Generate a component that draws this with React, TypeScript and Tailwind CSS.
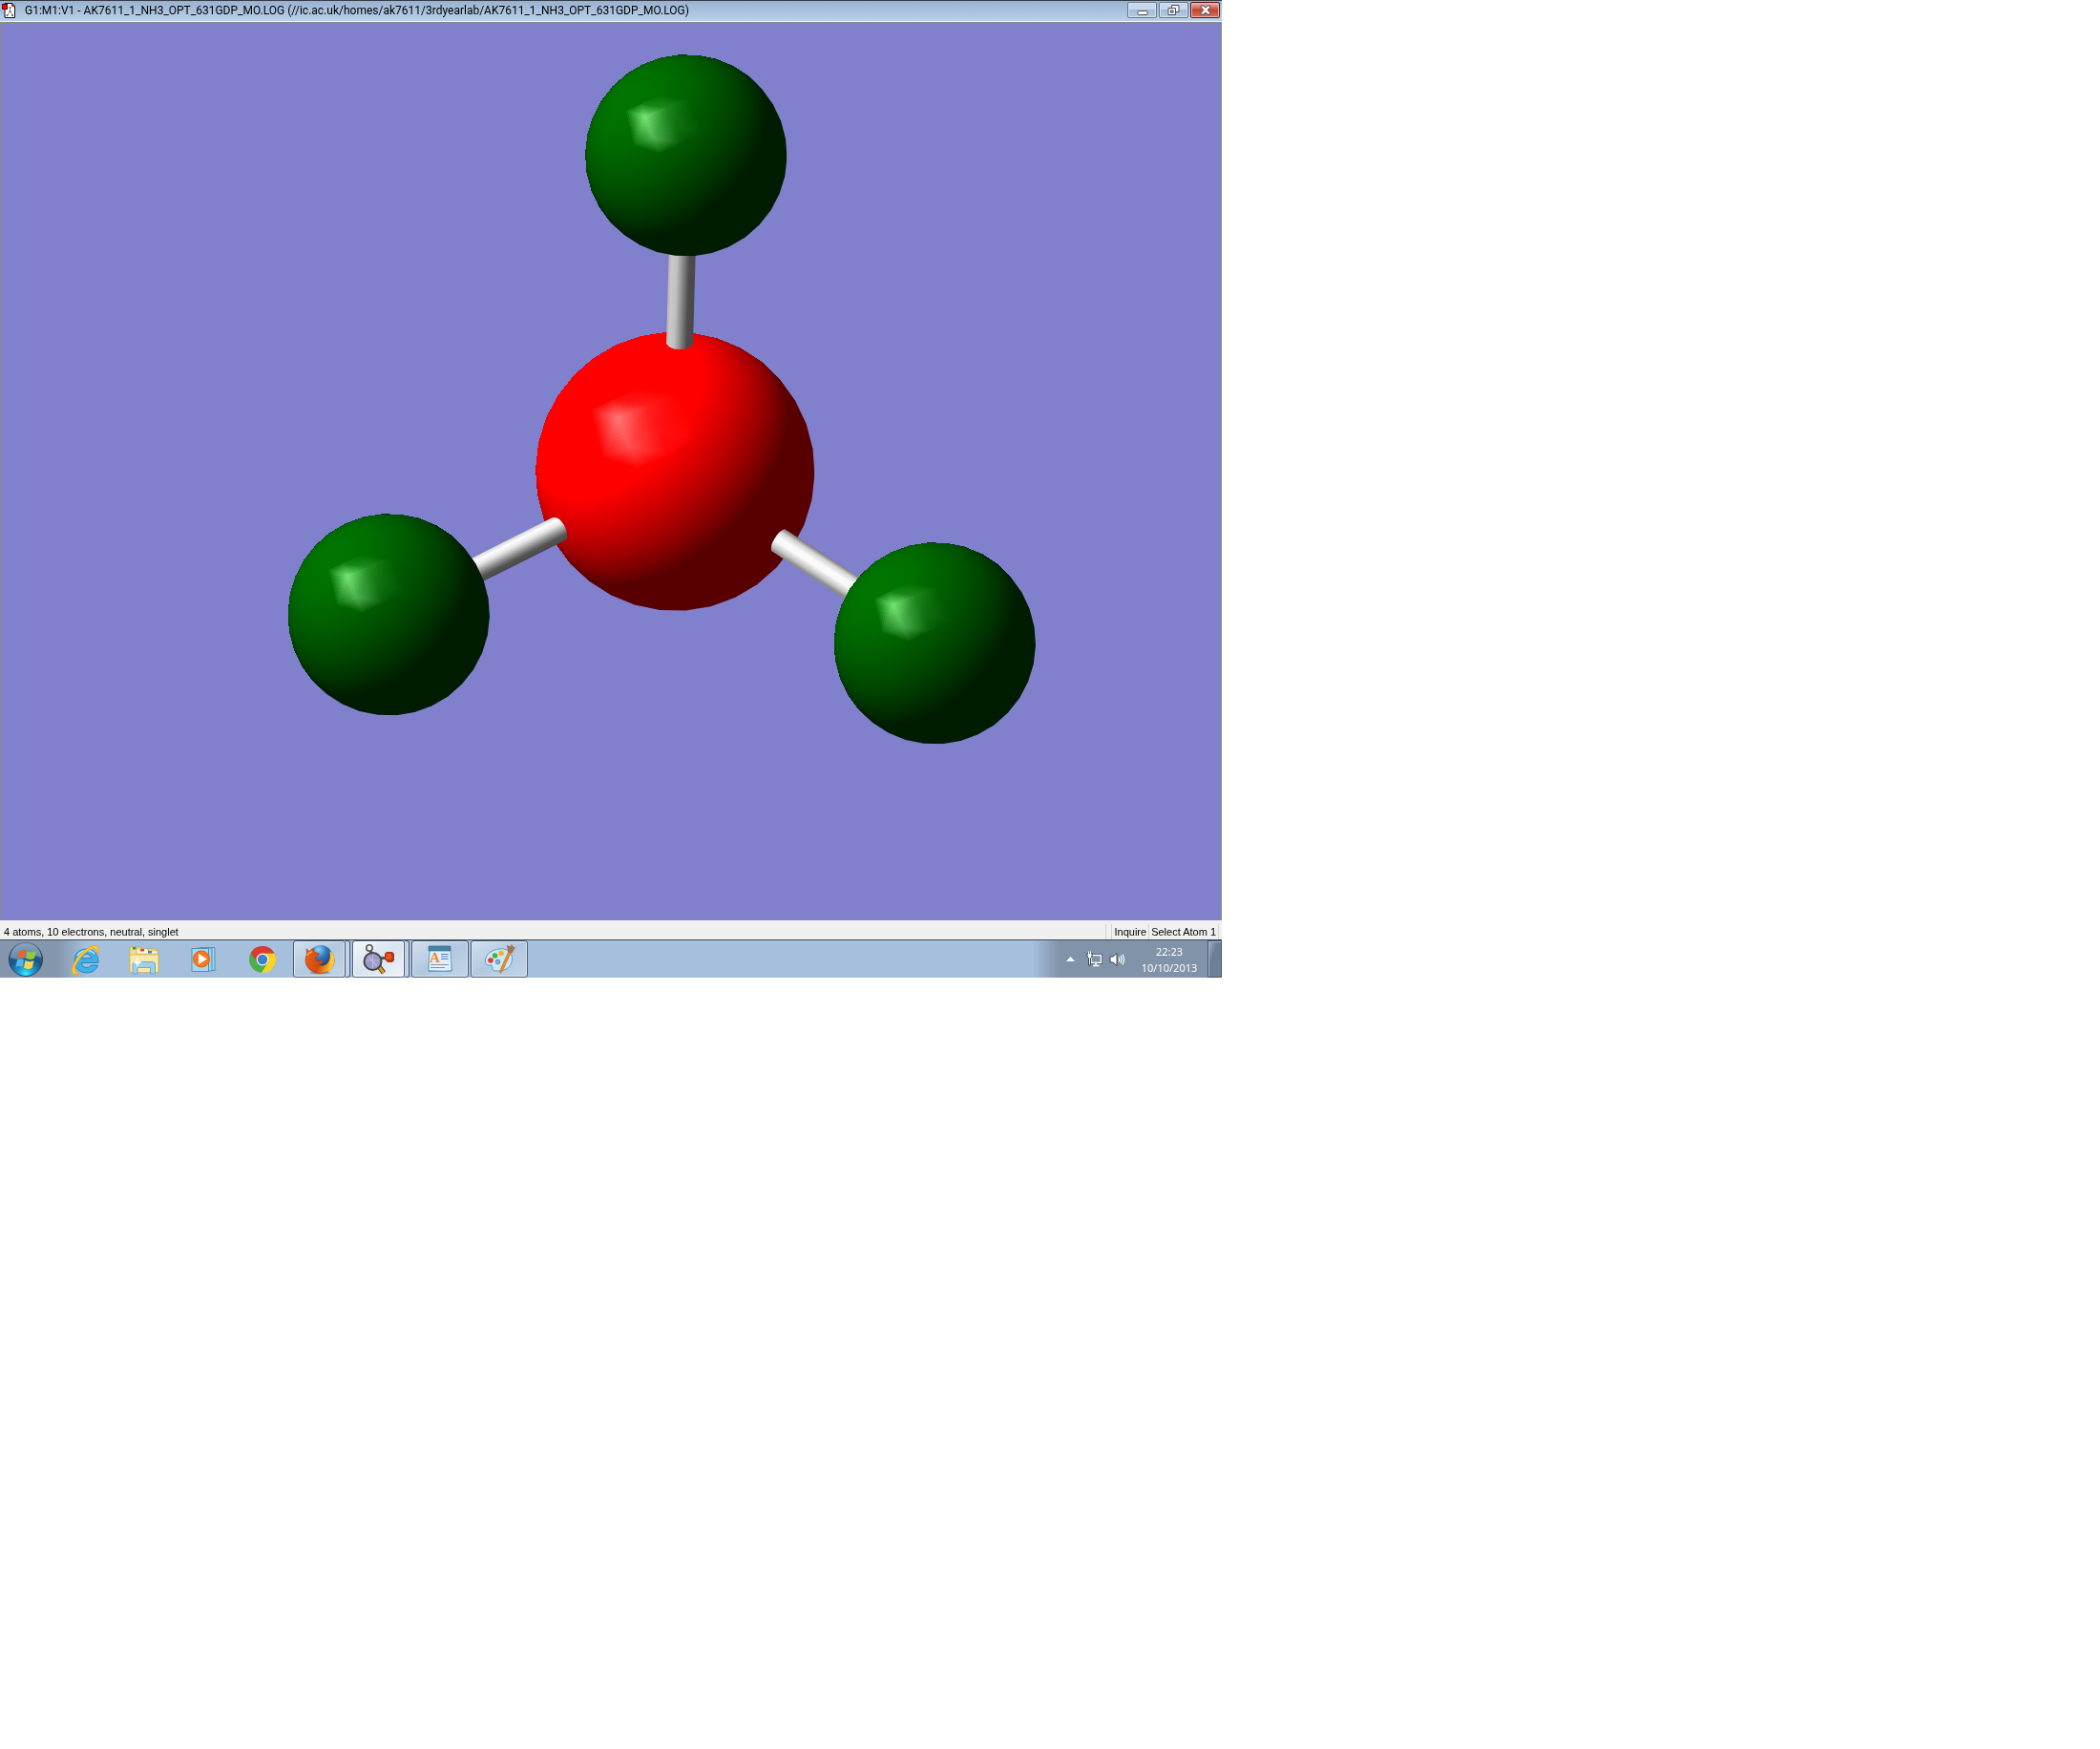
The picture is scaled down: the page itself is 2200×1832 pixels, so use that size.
import type { ReactNode } from 'react'

type Vec = [number, number]

// Direction of the lamp as seen from the viewer (y points down)
const LIGHT = { x: -0.58, y: -0.58, z: 0.57 }
const STEPS = 90
const SIDES = 34

// Vertices of the highlight on a unit sphere: x, y, brightness
const GLINT: Record<string, [number, number, number]> = {
  P: [-0.417, -0.385, 1],
  A: [-0.599, -0.446, 0.06],
  B: [-0.451, -0.515, 0.12],
  C: [-0.2, -0.47, 0.26],
  D: [-0.325, -0.173, 0.66],
  E: [-0.52, -0.104, 0.04],
  F: [-0.262, -0.024, 0.04],
  G: [-0.05, -0.127, 0.04],
  H: [-0.12, -0.3, 0.16],
  I: [0, -0.55, 0.02],
  J: [0.166, -0.23, 0],
  K: [-0.257, -0.6, 0],
}

const GLINT_FACES = ['PAB', 'PBC', 'PAE', 'PED', 'DEF', 'DFG', 'PCD', 'DCH', 'DHG', 'CHI', 'HIJ', 'HGJ', 'BKC', 'CKI']

function glintTriangles() {
  const n = 9
  const out: { points: string; level: number }[] = []
  for (const face of GLINT_FACES) {
    const [a, b, c] = face.split('').map((key) => GLINT[key])
    const at = (i: number, j: number) => {
      const u = i / n
      const v = j / n
      return a.map((val, k) => val * (1 - u - v) + b[k] * u + c[k] * v)
    }
    const push = (pts: number[][]) => {
      const level = (pts[0][2] + pts[1][2] + pts[2][2]) / 3
      out.push({ points: pts.map((p) => `${p[0].toFixed(4)},${p[1].toFixed(4)}`).join(' '), level })
    }
    for (let i = 0; i < n; i++) {
      for (let j = 0; j < n - i; j++) {
        push([at(i, j), at(i + 1, j), at(i, j + 1)])
        if (i + j < n - 1) push([at(i + 1, j), at(i + 1, j + 1), at(i, j + 1)])
      }
    }
  }
  return out
}

const glint = glintTriangles()

const outline = Array.from({ length: SIDES }, (_, i) => {
  const t = (i / SIDES) * Math.PI * 2 + 0.02
  return `${Math.cos(t).toFixed(4)},${Math.sin(t).toFixed(4)}`
}).join(' ')

const lightAngle = (Math.atan2(LIGHT.y, LIGHT.x) * 180) / Math.PI
const lightXY = Math.hypot(LIGHT.x, LIGHT.y)

interface AtomProps {
  center: Vec
  radius: number
  shade: (level: number) => string
}

// Each band is the part of the sphere where the light falls at least at `level`
function Atom({ center, radius, shade }: AtomProps) {
  return (
    <g transform={`translate(${center[0]} ${center[1]}) scale(${radius})`}>
      <g clipPath="url(#atom-outline)">
        <rect x="-1" y="-1" width="2" height="2" fill={shade(0)} />
        <g transform={`rotate(${lightAngle})`}>
          {Array.from({ length: STEPS }, (_, i) => {
            const level = i / STEPS
            const ring = Math.sqrt(1 - level * level)
            return (
              <g key={i} fill={shade(level)}>
                <ellipse cx={level * lightXY} cy="0" rx={ring * LIGHT.z} ry={ring} />
                {level < lightXY && <rect x={level / lightXY} y="-1" width="1" height="2" />}
              </g>
            )
          })}
        </g>
      </g>
      <use href="#glint" className="mix-blend-plus-lighter" />
    </g>
  )
}

const green = (level: number) => `rgb(0 ${Math.round(28 + 90 * level)} 0)`
const red = (level: number) => `rgb(${Math.min(255, Math.round(88 + 245 * level))} 0 0)`

function MoleculeView() {
  return (
    <svg viewBox="1 24 1278 940" className="block h-auto w-full bg-[#8180cc]" role="img" aria-label="Molecule">
      <defs>
        <clipPath id="atom-outline">
          <polygon points={outline} />
        </clipPath>
        <g id="glint" shapeRendering="crispEdges">
          {glint.map((t, i) => {
            const v = Math.round(t.level * 118)
            return <polygon key={i} points={t.points} fill={`rgb(${v} ${v} ${v})`} />
          })}
        </g>
        <linearGradient id="bond-top" gradientUnits="userSpaceOnUse" x1="699" y1="320" x2="728" y2="321">
          <stop offset="0" stopColor="#b4b4b4" />
          <stop offset="0.12" stopColor="#c9c9c9" />
          <stop offset="0.3" stopColor="#c0c0c0" />
          <stop offset="0.55" stopColor="#808080" />
          <stop offset="0.75" stopColor="#4c4c4c" />
          <stop offset="1" stopColor="#484848" />
        </linearGradient>
        <linearGradient id="bond-left" gradientUnits="userSpaceOnUse" x1="538" y1="563" x2="550" y2="587">
          <stop offset="0" stopColor="#d8d8d8" />
          <stop offset="0.15" stopColor="#fff" />
          <stop offset="0.35" stopColor="#e4e4e4" />
          <stop offset="0.65" stopColor="#808080" />
          <stop offset="0.8" stopColor="#545454" />
          <stop offset="1" stopColor="#484848" />
        </linearGradient>
        <linearGradient id="bond-right" gradientUnits="userSpaceOnUse" x1="861" y1="579" x2="847" y2="601">
          <stop offset="0" stopColor="#747474" />
          <stop offset="0.18" stopColor="#d4d4d4" />
          <stop offset="0.4" stopColor="#fafafa" />
          <stop offset="0.6" stopColor="#fafafa" />
          <stop offset="0.85" stopColor="#c4c4c4" />
          <stop offset="1" stopColor="#8c8c8c" />
        </linearGradient>
      </defs>
      <Atom center={[707.5, 494]} radius={146} shade={red} />
      <path d="M701 255 L729 255 L726 361 Q722 366 712 366 Q702 366 698 360Z" fill="url(#bond-top)" />
      <path d="M480 592 L577 543 Q583 540 588 546 Q595 554 594 565 L490 617Z" fill="url(#bond-left)" />
      <path d="M822 554 L915 614 L900 637 L808 577 Q807 571 811 565 Q816 556 822 554Z" fill="url(#bond-right)" />
      <Atom center={[719, 163]} radius={105.5} shade={green} />
      <Atom center={[407.5, 644]} radius={105.5} shade={green} />
      <Atom center={[979.5, 674]} radius={105.5} shade={green} />
    </svg>
  )
}

function TitleButton({ label, danger, children }: { label: string; danger?: boolean; children: ReactNode }) {
  return (
    <button
      type="button"
      aria-label={label}
      className={
        danger
          ? 'flex h-[17px] w-[31px] items-center justify-center rounded-xs border border-[#5a1420] bg-linear-to-b from-[#e8a598] from-10% via-[#c2442c] via-50% to-[#d4735c] shadow-[inset_0_0_0_1px_#eab5aa]'
          : 'flex h-[17px] w-[31px] items-center justify-center rounded-xs border border-[#66788f] bg-linear-to-b from-[#c6d8ec] from-45% via-[#a3bbd6] via-50% to-[#b5cbe4] shadow-[inset_0_0_0_1px_#d5e3f2]'
      }
    >
      {children}
    </button>
  )
}

function AppIcon() {
  return (
    <svg width="14" height="18" viewBox="0 0 14 18" aria-hidden="true">
      <path d="M3 1.5H11L13.5 4.5V16.5H3Z" fill="#fff" stroke="#111" />
      <path d="M10.5 1.5V4.5H13.5" fill="#e11" stroke="#111" strokeWidth="0.6" />
      <path d="M8.500 6V10M8.500 10L5.500 14M8.500 10L11.500 14" stroke="#999" fill="none" />
      <path d="M7.500 5H9.500V7H7.500ZM7.500 9H9.500V11H7.500ZM4.500 13H6.500V15H4.500ZM10 13H12V15H10Z" fill="#777" />
      <rect x="0.500" y="2.500" width="5" height="5" fill="#f00" stroke="#600" />
    </svg>
  )
}

function TitleBar() {
  return (
    <header className="flex h-[23px] items-center border-t border-b border-t-[#3a3a42] border-b-[#eef3f8] bg-linear-to-b from-[#98b2d1] to-[#b9d1ea] px-0.5 pb-0.5">
      <AppIcon />
      <h1 className="ml-2.5 grow truncate font-['Roboto','Open_Sans',sans-serif] text-[12px] leading-5 text-black">
        G1:M1:V1 - AK7611_1_NH3_OPT_631GDP_MO.LOG (//ic.ac.uk/homes/ak7611/3rdyearlab/AK7611_1_NH3_OPT_631GDP_MO.LOG)
      </h1>
      <div className="flex gap-0.5">
        <TitleButton label="Minimize">
          <svg width="12" height="12" viewBox="0 0 12 12" aria-hidden="true">
            <rect x="1" y="6.500" width="10" height="4" rx="1" fill="#fff" stroke="#4a5263" />
          </svg>
        </TitleButton>
        <TitleButton label="Restore">
          <svg width="13" height="13" viewBox="0 0 13 13" aria-hidden="true">
            <path d="M4.500 1.500H12V8.500H4.500Z" fill="#f4f6f9" stroke="#4a5263" />
            <path d="M1 4.500H8.500V11.500H1Z" fill="#f4f6f9" stroke="#4a5263" />
            <rect x="3.500" y="7" width="2.500" height="2" fill="#a9bfd8" stroke="#4a5263" />
          </svg>
        </TitleButton>
        <TitleButton label="Close" danger>
          <svg width="12" height="11" viewBox="0 0 12 11" aria-hidden="true">
            <path
              d="M1 1H4.200L6 3.200L7.800 1H11V2.200L8.200 5.500L11 8.800V10H7.800L6 7.800L4.200 10H1V8.800L3.800 5.500L1 2.200Z"
              fill="#fff"
              stroke="#4c4a58"
            />
          </svg>
        </TitleButton>
      </div>
    </header>
  )
}

function StatusBar() {
  return (
    <footer className="flex h-5 items-center bg-[#f0f0f0] pt-1 pr-[3px] pl-1 font-['Liberation_Sans',Arial,sans-serif] text-[11px] leading-4 text-black">
      <p className="grow">4 atoms, 10 electrons, neutral, singlet</p>
      <span className="h-4 w-[7px] border-x border-[#d4d4d4]" />
      <p className="px-0.5">Inquire</p>
      <p className="border-x border-[#d4d4d4] px-0.5">Select Atom 1</p>
    </footer>
  )
}

function StartIcon() {
  return (
    <svg width="38" height="38" viewBox="0 0 38 38" aria-hidden="true">
      <defs>
        <radialGradient id="orb" cx="0.5" cy="0.95" r="0.9">
          <stop offset="0" stopColor="#3ff0ff" />
          <stop offset="0.25" stopColor="#1a9ed4" />
          <stop offset="0.6" stopColor="#1c527f" />
          <stop offset="1" stopColor="#5b7c9c" />
        </radialGradient>
      </defs>
      <circle cx="19" cy="19" r="17.500" fill="url(#orb)" stroke="#23405e" />
      <path d="M3 17A16 16 0 0 1 35 17Q27 13 19 17T3 17Z" fill="#c7d9e8" opacity="0.4" />
      <path d="M12.500 10Q15.500 8 19 10L17.500 17.500Q14 15.700 10.500 17.500Z" fill="#f0622a" />
      <path d="M20.500 10.500Q24.500 12.700 30 10L28 18Q23.500 20 19 17.800Z" fill="#95c83d" />
      <path d="M10 19.500Q13.500 17.700 17 19.500L15.500 27Q12 25 8.500 27Z" fill="#55b4ec" />
      <path d="M18.500 20Q23 22.300 27.500 20.300L25.500 28Q21 30 17 27.800Z" fill="#ffd34e" />
    </svg>
  )
}

function ExplorerIcon() {
  return (
    <svg width="32" height="34" viewBox="0 0 32 34" aria-hidden="true">
      <path
        d="M16.500 6C9 6 4 11 4 18.500S9.500 31 17 31C22.500 31 27 28 28.500 23H21.500Q20 25.500 17 25.500Q12 25.500 11.500 20.500H29C29.500 11.500 24.500 6 16.500 6ZM11.700 15.800Q12.500 11.300 16.700 11.300Q21 11.300 21.500 15.800Z"
        fill="#3fb0e8"
        stroke="#1679bd"
        strokeWidth="0.8"
      />
      <path d="M7 13Q11 7.500 17 7.500Q22 7.500 25 11" fill="none" stroke="#bfe9fb" strokeWidth="1.500" />
      <path
        d="M27.500 12.500Q31 4 27.500 2.500C22.500 1 11 8.500 5.500 17.500C1 25 0 31.500 3.500 32.500Q6 33 10 30Q4.500 31.500 4.500 27.500C4.500 22 11 13 18 8C23 4.500 28.500 3.500 27.500 12.500Z"
        fill="#fdc92b"
        stroke="#e0a010"
        strokeWidth="0.6"
      />
    </svg>
  )
}

function FolderIcon() {
  return (
    <svg width="34" height="32" viewBox="0 0 34 32" aria-hidden="true">
      <path d="M2 8V3H13L15 5H30V9H32V29H2Z" fill="#f3dc8c" stroke="#c9a94c" strokeWidth="0.8" />
      <path d="M9 5H21V7H31V10H9Z" fill="#fff8dc" stroke="#c9a94c" strokeWidth="0.6" />
      <rect x="5" y="3" width="3.500" height="2.500" fill="#18a82c" />
      <rect x="13" y="5" width="4" height="2.500" fill="#d8412c" />
      <rect x="21" y="7" width="4" height="2.500" fill="#2c86d8" />
      <path d="M2 11H32V28Q32 29.500 30.500 29.500H3.500Q2 29.500 2 28Z" fill="#fbe9a8" stroke="#d1b257" strokeWidth="0.8" />
      <path d="M5 31V21Q5 18.500 8 18.500H25Q28.500 18.500 28.500 21V31H23.500V24.500H10V31Z" fill="#9ed0ea" stroke="#5c9dc4" strokeWidth="0.8" />
      <path d="M10 13L11 17.500L15 19L11 20.500L10 25L9 20.500L5 19L9 17.500Z" fill="#fff" />
    </svg>
  )
}

function MediaIcon() {
  return (
    <svg width="30" height="28" viewBox="0 0 30 28" aria-hidden="true">
      <path d="M14 1.500H25V24H29L27 25.500H14Z" fill="#7fb4d4" opacity="0.6" />
      <path d="M10 1.500H25V25.500H10Z" fill="#a5d3ec" stroke="#4f91b8" />
      <path d="M6 2H22V26H6Z" fill="#9fd0ea" stroke="#4f91b8" />
      <path d="M1 2.500H18.500V26.500H1Z" fill="#a9d6ee" stroke="#4f91b8" />
      <circle cx="11" cy="13.500" r="8.500" fill="#f47a20" stroke="#e05f0c" />
      <path d="M8 8L17 13.500L8 19Z" fill="#fff" />
    </svg>
  )
}

function ChromeIcon() {
  return (
    <svg width="30" height="30" viewBox="0 0 30 30" aria-hidden="true">
      <circle cx="15" cy="15" r="14" fill="#4cae4f" />
      <path d="M15 8.500H27.400A14 14 0 0 1 14 29L20.600 18.200Z" fill="#fcd327" />
      <path d="M2.900 8A14 14 0 0 1 27.400 8.500H15L9.400 18Z" fill="#dd3a30" />
      <circle cx="15" cy="15" r="6.500" fill="#f2f2f2" />
      <circle cx="15" cy="15" r="5.200" fill="#3f80cc" />
    </svg>
  )
}

function FirefoxIcon() {
  return (
    <svg width="32" height="32" viewBox="0 0 32 32" aria-hidden="true">
      <defs>
        <radialGradient id="globe" cx="0.4" cy="0.2" r="0.8">
          <stop offset="0" stopColor="#8fd6f7" />
          <stop offset="0.4" stopColor="#2f7cc4" />
          <stop offset="1" stopColor="#12346f" />
        </radialGradient>
        <linearGradient id="tail" x1="0" y1="0" x2="1" y2="0.3">
          <stop offset="0" stopColor="#e8641c" />
          <stop offset="0.6" stopColor="#d4480f" />
          <stop offset="1" stopColor="#fbc02a" />
        </linearGradient>
      </defs>
      <ellipse cx="16" cy="30" rx="11" ry="1.500" fill="#5c6f86" opacity="0.5" />
      <circle cx="17" cy="13.500" r="12.500" fill="url(#globe)" />
      <path
        d="M2 5L5.500 7.500Q7 4.500 10 4.500L9.500 7.500Q12 9.500 15 9.500Q16 11.500 12 13.500Q11 16 12.500 17.500Q16 18.500 19 16.500Q20 20 15 21.500Q20 24 24 20Q28 16 26.500 7Q31.500 11 31.300 17C31 25 24.500 30.500 16 30.500C7.500 30.500 1 24.500 1 16Q1 13 2.500 10.500Z"
        fill="url(#tail)"
        stroke="#a53a0c"
        strokeWidth="0.6"
      />
      <path d="M26.500 7Q31.500 11 31.300 17Q31 25 24 28.500Q29 21 25.500 19Q28 15 26.500 7Z" fill="#fccb3a" />
      <path d="M3 12Q4 8.500 8 8" stroke="#f9a24c" strokeWidth="1.500" fill="none" />
    </svg>
  )
}

function MoleculeIcon() {
  return (
    <svg width="34" height="32" viewBox="0 0 34 32" aria-hidden="true">
      <path d="M7 4L10 12M18 15L26 14" stroke="#555" strokeWidth="3" />
      <path d="M16 22L22 30" stroke="#4a3a18" strokeWidth="5" />
      <path d="M16 22L22 30" stroke="#d69a2c" strokeWidth="3" />
      <circle cx="7" cy="4" r="3.200" fill="#eee" stroke="#555" strokeWidth="1.500" />
      <circle cx="10.500" cy="18" r="9" fill="#9c98c8" stroke="#444" strokeWidth="2" />
      <path d="M4 17H17M10.500 11V25M6 13L15 23" stroke="#bcb8e0" strokeWidth="1.200" />
      <path d="M25 8H31L33 10V17L31 19H26L23 16V10Z" fill="#b03a18" />
      <path d="M24.500 10H30V16H24.500Z" fill="#f0501c" />
    </svg>
  )
}

function WordPadIcon() {
  return (
    <svg width="28" height="30" viewBox="0 0 28 30" aria-hidden="true">
      <path d="M3 3H25L27 27L25 28H2L1 27Z" fill="#5f9fc8" />
      <path d="M3.500 3H24.500L26 26Q24 27.500 2 26.500Z" fill="#e2effa" stroke="#6fa6cc" strokeWidth="0.6" />
      <rect x="2" y="1" width="23" height="5" rx="0.500" fill="#4583aa" stroke="#2a5f85" strokeWidth="0.600" />
      <text x="3" y="18" fontSize="15" fontWeight="700" fill="#f0862a" fontFamily="Liberation Serif, serif">
        A
      </text>
      <path d="M15 9.500H22.500M15 12H22.500M15 14.500H22.500" stroke="#4b7fc4" strokeWidth="1.200" />
      <path d="M4 20.500H23M4 23.500H19" stroke="#8397ab" />
    </svg>
  )
}

function PaintIcon() {
  return (
    <svg width="34" height="32" viewBox="0 0 34 32" aria-hidden="true">
      <path
        d="M17 5C26 4 31 9 30.500 16C30 24 23 28.500 15 28Q9 28 10 24.500Q10.500 21.500 7 22Q2 22.500 2.500 17C3 10 9 6 17 5Z"
        fill="#cfe7f6"
        stroke="#5ba0cc"
      />
      <circle cx="8" cy="17" r="2.800" fill="#e0392e" />
      <circle cx="12.500" cy="12" r="2.800" fill="#49b03c" />
      <circle cx="19" cy="9.500" r="2.800" fill="#f5b51f" />
      <circle cx="15.500" cy="18.500" r="2.300" fill="#7fb8dc" stroke="#4a8fbc" />
      <path d="M18 30Q17 29 19 25L27 7L29.500 8L21 27Q19 31 18 30Z" fill="#ee8e2c" stroke="#b8641a" strokeWidth="0.600" />
      <path d="M26.500 8L25.500 1.500L28.500 3L30 0.500L31.500 3L33.500 3.500L30.500 8.500Z" fill="#a9744c" stroke="#7c5434" strokeWidth="0.500" />
    </svg>
  )
}

function TaskButton({ label, active, children }: { label: string; active?: boolean; children: ReactNode }) {
  return (
    <button
      type="button"
      aria-label={label}
      className={
        active
          ? 'flex h-[39px] grow items-center justify-center rounded-[3px] border border-[#4b5d73] bg-linear-to-br from-[#f4f8fc] via-[#d8e4f1] to-[#eef4fa] shadow-[inset_0_0_0_1px_#ffffff]'
          : 'flex h-[39px] grow items-center justify-center rounded-[3px] border border-[#4b5d73] bg-linear-to-br from-[#d3e0ef] via-[#b3c8e0] to-[#c3d4e8] shadow-[inset_0_0_0_1px_#dbe7f3]'
      }
    >
      {children}
    </button>
  )
}

// Edge of a second window stacked behind the button
function StackEdge() {
  return <span className="h-[39px] w-[5px] rounded-r-[3px] border-y border-r border-[#4b5d73] bg-[#c3d4e8]" />
}

function Taskbar() {
  return (
    <nav className="flex h-10 items-start border-t border-[#3c4c5e] bg-linear-to-r from-[#8496ab] from-[60px] via-[#a6bfdc] via-[90px] to-[#a6bfdc] font-['Noto_Sans','Open_Sans',sans-serif]">
      <div className="flex h-[39px] items-center pl-2">
        <button type="button" aria-label="Start" className="mr-7">
          <StartIcon />
        </button>
        <button type="button" aria-label="Internet Explorer" className="mr-7">
          <ExplorerIcon />
        </button>
        <button type="button" aria-label="Windows Explorer" className="mr-7">
          <FolderIcon />
        </button>
        <button type="button" aria-label="Media Player" className="mr-[30px] ml-1">
          <MediaIcon />
        </button>
        <button type="button" aria-label="Chrome">
          <ChromeIcon />
        </button>
      </div>
      <div className="ml-[17px] flex gap-0.5">
        <div className="flex w-[60px]">
          <TaskButton label="Firefox">
            <FirefoxIcon />
          </TaskButton>
          <StackEdge />
        </div>
        <div className="flex w-[60px]">
          <TaskButton label="GaussView" active>
            <MoleculeIcon />
          </TaskButton>
          <StackEdge />
        </div>
        <div className="flex w-[60px]">
          <TaskButton label="WordPad">
            <WordPadIcon />
          </TaskButton>
        </div>
        <div className="flex w-[60px]">
          <TaskButton label="Paint">
            <PaintIcon />
          </TaskButton>
        </div>
      </div>
      <div className="ml-auto flex h-[39px] items-center bg-linear-to-r from-[#8093a8]/0 to-[#8093a8] to-[28px] pl-[35px]">
        <button type="button" aria-label="Show hidden icons" className="mr-3">
          <svg width="9" height="5" viewBox="0 0 9 5" aria-hidden="true">
            <path d="M4.500 0L9 5H0Z" fill="#fff" />
          </svg>
        </button>
        <button type="button" aria-label="Network" className="mr-[7px]">
          <svg width="17" height="17" viewBox="0 0 17 17" aria-hidden="true">
            <path d="M5 4.500H15.500V12.500H5Z" fill="#7688a0" stroke="#36424f" strokeWidth="3" />
            <path d="M5 4.500H15.500V12.500H5ZM10 13V15M7 15.500H13.500" fill="#8093a8" stroke="#fff" strokeWidth="1.500" />
            <path d="M1 2.500H6V6L4.500 7.500V15H2.500V7.500L1 6Z" fill="#fff" stroke="#36424f" />
            <path d="M2.500 0.500V3M4.500 0.500V3" stroke="#fff" />
          </svg>
        </button>
        <button type="button" aria-label="Volume" className="mr-4">
          <svg width="17" height="16" viewBox="0 0 17 16" aria-hidden="true">
            <path d="M1 5H4L8 1.500V14.500L4 11H1Z" fill="#fff" stroke="#36424f" />
            <path d="M10 5.500Q11.500 8 10 10.500M12 4Q14 8 12 12M14 2.500Q17 8 14 13.500" fill="none" stroke="#fff" strokeWidth="1.200" />
          </svg>
        </button>
        <time dateTime="2013-10-10T22:23" className="mr-2.5 w-15 text-center text-[11px] leading-[17px] text-white">
          22:23
          <br />
          10/10/2013
        </time>
        <button
          type="button"
          aria-label="Show desktop"
          className="h-[39px] w-[15px] border border-[#46566a] bg-linear-to-br from-[#a3b1c2] via-[#6c7e94] via-40% to-[#71849a] shadow-[inset_1px_1px_0_0_#a8b6c6]"
        />
      </div>
    </nav>
  )
}

export default function App() {
  return (
    <div className="min-h-screen bg-white">
      <div className="w-full max-w-7xl">
        <TitleBar />
        <main className="border-x border-t border-[#8a8a8a]">
          <MoleculeView />
        </main>
        <StatusBar />
        <Taskbar />
      </div>
    </div>
  )
}
